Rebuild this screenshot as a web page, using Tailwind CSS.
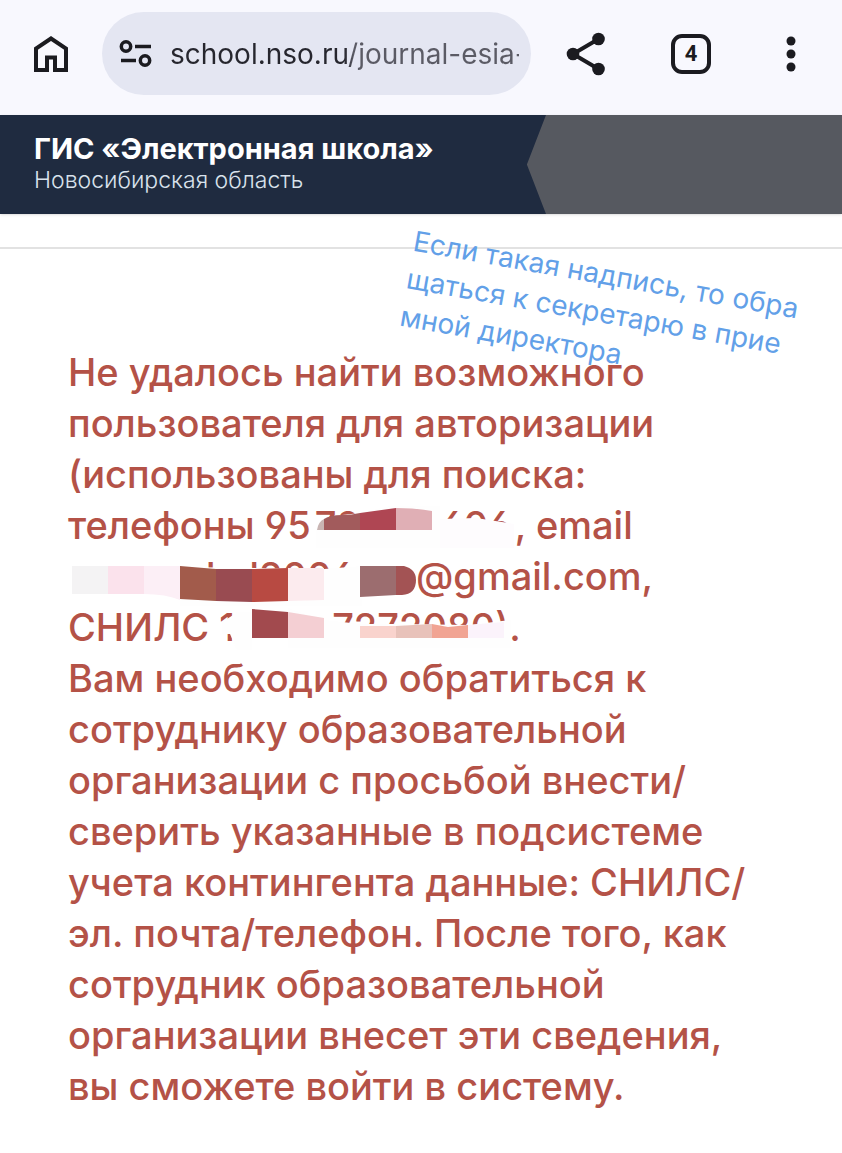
<!DOCTYPE html>
<html lang="ru">
  <head>
    <meta charset="utf-8" />
    <meta name="viewport" content="width=device-width, initial-scale=1" />
    <title>ГИС «Электронная школа»</title>
    <script src="https://cdn.jsdelivr.net/npm/@tailwindcss/browser@4"></script>
  </head>
  <body class="min-h-screen bg-white font-['Inter',sans-serif]">
    <!-- browser bar -->
    <nav class="flex items-center bg-[#f8f8fe] pt-3 pb-5 pl-8 pr-[35px] text-[#1b1b20]">
      <button aria-label="Домой" class="mr-8 shrink-0">
        <svg class="w-[38px] h-[40px]" viewBox="0 0 38 40" fill="none" stroke="currentColor" stroke-width="4">
          <path d="M4 36V14.500L19 4.500L34 14.500V36H23V23.500H15V36Z" />
        </svg>
      </button>
      <form class="flex grow h-[83px] items-center rounded-full bg-[#e4e6f2] pl-4 pr-3">
        <svg class="w-9 h-7 shrink-0" viewBox="0 0 36 28" fill="none" stroke="currentColor" stroke-width="3.500">
          <circle cx="8" cy="6.500" r="4.700" />
          <path d="M17 6.500H33M3 20.500H18" />
          <circle cx="27" cy="20.500" r="4.700" />
        </svg>
        <input
          type="text"
          aria-label="Адрес"
          value="school.nso.ru/journal-esia-"
          class="ml-4 w-full min-w-0 bg-linear-to-r from-[#26262e] from-[174px] to-[#5b5b65] to-[184px] bg-clip-text text-[28px] leading-10 text-transparent outline-none"
        />
      </form>
      <button aria-label="Поделиться" class="ml-8 shrink-0">
        <svg class="w-12 h-12" viewBox="0 0 48 48" fill="currentColor">
          <path d="M35.500 9L10 24L35.500 39" fill="none" stroke="currentColor" stroke-width="4" />
          <circle cx="35.500" cy="9" r="6.300" />
          <circle cx="10" cy="24" r="6.300" />
          <circle cx="35.500" cy="39" r="6.300" />
        </svg>
      </button>
      <button aria-label="Вкладки" class="ml-15 flex size-10 shrink-0 items-center justify-center rounded-[11px] border-4 border-current font-['Roboto',sans-serif] text-[22px] font-bold">4</button>
      <button aria-label="Меню" class="ml-16 shrink-0">
        <svg class="w-8 h-10" viewBox="0 0 32 40" fill="currentColor">
          <circle cx="16" cy="7" r="4.500" />
          <circle cx="16" cy="20" r="4.500" />
          <circle cx="16" cy="33" r="4.500" />
        </svg>
      </button>
    </nav>

    <!-- site header -->
    <header class="flex bg-[#565960] shadow-sm">
      <div class="w-[546px] bg-[#1f2b40] pt-4 pb-5 pl-[34px] [clip-path:polygon(0_0,100%_0,96.5%_50%,100%_100%,0_100%)]">
        <h1 class="text-[29px] leading-9 font-bold text-white">ГИС «Электронная школа»</h1>
        <p class="text-[23px] leading-[27px] font-light text-[#d9e2ec]">Новосибирская область</p>
      </div>
    </header>

    <main class="relative">
      <div class="h-[35px] border-b-2 border-[#e2e2e2]"></div>

      <div class="relative pt-[98px] pl-[68px]">
        <p class="text-[38px] leading-[51px] font-medium whitespace-nowrap text-[#b45247] [font-feature-settings:'cv03','cv04']">
          Не удалось найти возможного<br />
          пользователя для авторизации<br />
          (использованы для поиска:<br />
          телефоны 95<span class="inline-flex w-[204px] justify-between pl-1 pr-1"><span>70</span><span>606</span></span>, email<br />
          <span class="inline-flex w-[348px] gap-5 pl-[124px]"><span>d</span><span>d2006</span></span>@gmail.com,<br />
          СНИЛС <span class="inline-flex w-[290px] justify-between"><span>1</span><span>7272080)</span></span>.<br />
          Вам необходимо обратиться к<br />
          сотруднику образовательной<br />
          организации с просьбой внести/<br />
          сверить указанные в подсистеме<br />
          учета контингента данные: СНИЛС/<br />
          эл. почта/телефон. После того, как<br />
          сотрудник образовательной<br />
          организации внесет эти сведения,<br />
          вы сможете войти в систему.
        </p>
      </div>

      <!-- smudges over the personal data -->
      <svg class="absolute top-[286px] left-[60px] h-[150px] w-[500px]" viewBox="60 500 500 150" aria-hidden="true">
        <!-- phone -->
        <path fill="#fefefe" d="M316 529L326 518L342 515L360 513L390 506H440V548H316Z" />
        <path fill="#fefcfe" d="M440 519L476 518L514 524V548H440Z" />
        <path fill="#c9b5b3" d="M317 530Q318 522 324 519V530Z" />
        <path fill="#a25b5c" d="M324 519Q330 515 342 515Q352 515 360 513V530H324Z" />
        <path fill="#af4653" d="M360 513L396 508V530H360Z" />
        <path fill="#e0afb5" d="M396 508Q416 508 432 511V530H396Z" />
        <!-- email -->
        <path fill="#fefefe" d="M180 567L324 569L362 566V606H180Z" />
        <path fill="#f4f3f4" d="M72 566H108V594H72Z" />
        <path fill="#fbe2ec" d="M108 566H144V594H108Z" />
        <path fill="#fceff6" d="M144 566H180V600Q166 594 144 594Z" />
        <path fill="#a25b4b" d="M180 566L216 569V601L180 599Z" />
        <path fill="#994b51" d="M216 569H252V602L216 601Z" />
        <path fill="#b84a42" d="M252 569L288 568V601L252 602Z" />
        <path fill="#fcebee" d="M288 568H324V600L288 601Z" />
        <path fill="#9c6d6f" d="M360 566H396V595L360 597Z" />
        <path fill="#a35354" d="M396 566H404Q416 569 416 580Q416 594 402 595H396Z" />
        <!-- snils -->
        <path fill="#fefefe" d="M222 622L238 612H252V650H237L230 634H222Z" />
        <path fill="#fefefe" d="M288 608L324 620L360 624H400L470 625L511 620V648H288Z" />
        <path fill="#a24a4e" d="M252 609L288 612V638H252Z" />
        <path fill="#f4cfd3" d="M288 612L324 618V638H288Z" />
        <path fill="#f9d3cd" d="M360 626H396V638H360Z" />
        <path fill="#e8c2ba" d="M396 626L432 624V638H396Z" />
        <path fill="#f1a493" d="M432 624L448 627L468 625V638H432Z" />
        <path fill="#fbf3fb" d="M468 625L504 622V638H468Z" />
      </svg>

      <!-- slanted hint over the page -->
      <p class="absolute top-2 left-[417px] origin-top-left rotate-[10deg] text-[28px] leading-[38px] whitespace-nowrap text-[#62a0e8]">
        Если такая надпись, то обра<br />щаться к секретарю в прие<br />мной директора
      </p>
    </main>
  </body>
</html>
